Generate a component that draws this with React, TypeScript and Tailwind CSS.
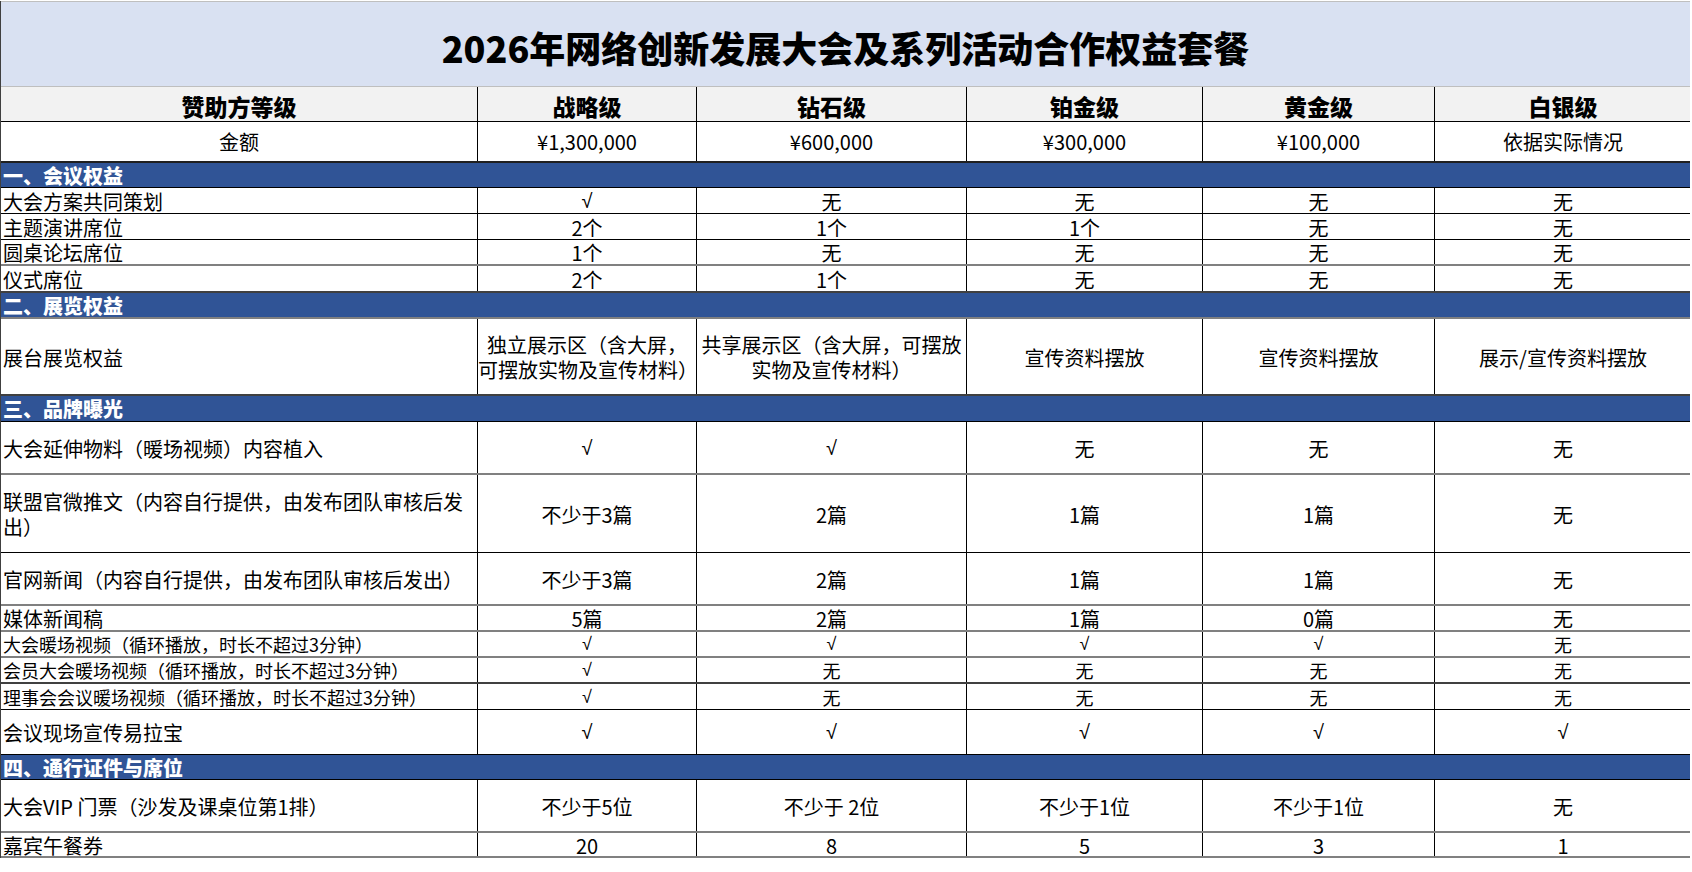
import React from "react";

type Row = {
  label: string;
  values: string[];
  h: string;
  b: string;
  small?: boolean;
};

const GRID = "grid grid-cols-[477px_219px_270px_236px_232px_256px]";

const BLACK = "border-b border-black";
const GRAY = "border-b-2 border-[#808080]";
const DGRAY = "border-b-2 border-[#404040]";

function Section({ title, h, b }: { title: string; h: string; b: string }) {
  return (
    <div className={`${h} ${b} bg-[#305496] flex items-center pl-[2px] pt-[1px] text-white font-black text-[20px] leading-[20px]`}>
      {title}
    </div>
  );
}

function Val({ v }: { v: string }) {
  if (v === "√") {
    return <span className="font-['Liberation_Sans',sans-serif]">√</span>;
  }
  return <>{v}</>;
}

function DataRow({ r }: { r: Row }) {
  const multi = r.label.includes("\n") || r.values.some((v) => v.includes("\n"));
  const size = r.small ? "text-[18px]" : "text-[20px]";
  const lead = multi ? "leading-[25px]" : r.small ? "leading-[19px]" : "leading-[21px]";
  return (
    <div className={`${GRID} ${r.h} ${r.b} ${size} ${lead}`}>
      <div className="border-r border-black flex items-center pl-[2px] pt-[1px] whitespace-pre-line">
        {r.label}
      </div>
      {r.values.map((v, i) => (
        <div
          key={i}
          className={`${i < 4 ? "border-r border-black" : ""} flex items-center justify-center text-center pt-[1px] whitespace-pre-line`}
        >
          <Val v={v} />
        </div>
      ))}
    </div>
  );
}

const sec1: Row[] = [
  { label: "大会方案共同策划", values: ["√", "无", "无", "无", "无"], h: "h-[26px]", b: BLACK },
  { label: "主题演讲席位", values: ["2个", "1个", "1个", "无", "无"], h: "h-[26px]", b: BLACK },
  { label: "圆桌论坛席位", values: ["1个", "无", "无", "无", "无"], h: "h-[26px]", b: GRAY },
  { label: "仪式席位", values: ["2个", "1个", "无", "无", "无"], h: "h-[27px]", b: DGRAY },
];

const sec2: Row[] = [
  {
    label: "展台展览权益",
    values: [
      "独立展示区（含大屏，\n可摆放实物及宣传材料）",
      "共享展示区（含大屏，可摆放\n实物及宣传材料）",
      "宣传资料摆放",
      "宣传资料摆放",
      "展示/宣传资料摆放",
    ],
    h: "h-[77px]",
    b: DGRAY,
  },
];

const sec3: Row[] = [
  { label: "大会延伸物料（暖场视频）内容植入", values: ["√", "√", "无", "无", "无"], h: "h-[53px]", b: GRAY },
  {
    label: "联盟官微推文（内容自行提供，由发布团队审核后发\n出）",
    values: ["不少于3篇", "2篇", "1篇", "1篇", "无"],
    h: "h-[78px]",
    b: BLACK,
  },
  {
    label: "官网新闻（内容自行提供，由发布团队审核后发出）",
    values: ["不少于3篇", "2篇", "1篇", "1篇", "无"],
    h: "h-[53px]",
    b: GRAY,
  },
  { label: "媒体新闻稿", values: ["5篇", "2篇", "1篇", "0篇", "无"], h: "h-[26px]", b: GRAY },
  {
    label: "大会暖场视频（循环播放，时长不超过3分钟）",
    values: ["√", "√", "√", "√", "无"],
    h: "h-[26px]",
    b: GRAY,
    small: true,
  },
  {
    label: "会员大会暖场视频（循环播放，时长不超过3分钟）",
    values: ["√", "无", "无", "无", "无"],
    h: "h-[26px]",
    b: DGRAY,
    small: true,
  },
  {
    label: "理事会会议暖场视频（循环播放，时长不超过3分钟）",
    values: ["√", "无", "无", "无", "无"],
    h: "h-[26px]",
    b: BLACK,
    small: true,
  },
  { label: "会议现场宣传易拉宝", values: ["√", "√", "√", "√", "√"], h: "h-[45px]", b: BLACK },
];

const sec4: Row[] = [
  {
    label: "大会VIP 门票（沙发及课桌位第1排）",
    values: ["不少于5位", "不少于 2位", "不少于1位", "不少于1位", "无"],
    h: "h-[53px]",
    b: GRAY,
  },
  { label: "嘉宾午餐券", values: ["20", "8", "5", "3", "1"], h: "h-[25px]", b: GRAY },
];

export default function App() {
  return (
    <div className="w-[1692px] h-[872px] bg-white text-black font-['Noto_Sans_CJK_SC','Noto_Sans',sans-serif] overflow-hidden">
      <div className="w-[1690px] border-l border-[#404040] mt-[1px]">
        <div className="h-[86px] bg-[#D9E1F2] border-t border-[#bfbfbf] border-b border-[#404040] flex items-center justify-center text-[36px] font-black leading-[40px] pt-[6px]">
          2026年网络创新发展大会及系列活动合作权益套餐
        </div>
        <div className={`${GRID} h-[35px] bg-[#F2F2F2] border-b border-black text-[23px] font-black leading-[24px]`}>
          {["赞助方等级", "战略级", "钻石级", "铂金级", "黄金级", "白银级"].map((t, i) => (
            <div key={i} className={`${i < 5 ? "border-r border-black" : ""} flex items-center justify-center pt-[3px]`}>
              {t}
            </div>
          ))}
        </div>
        <div className={`${GRID} h-[41px] border-b-2 border-[#202020] text-[20px] leading-[22px]`}>
          {["金额", "¥1,300,000", "¥600,000", "¥300,000", "¥100,000", "依据实际情况"].map((t, i) => (
            <div key={i} className={`${i < 5 ? "border-r border-black" : ""} flex items-center justify-center`}>
              {t}
            </div>
          ))}
        </div>
        <Section title="一、会议权益" h="h-[25px]" b={BLACK} />
        {sec1.map((r, i) => (
          <DataRow key={i} r={r} />
        ))}
        <Section title="二、展览权益" h="h-[26px]" b={GRAY} />
        {sec2.map((r, i) => (
          <DataRow key={i} r={r} />
        ))}
        <Section title="三、品牌曝光" h="h-[26px]" b={BLACK} />
        {sec3.map((r, i) => (
          <DataRow key={i} r={r} />
        ))}
        <Section title="四、通行证件与席位" h="h-[25px]" b={BLACK} />
        {sec4.map((r, i) => (
          <DataRow key={i} r={r} />
        ))}
      </div>
    </div>
  );
}
